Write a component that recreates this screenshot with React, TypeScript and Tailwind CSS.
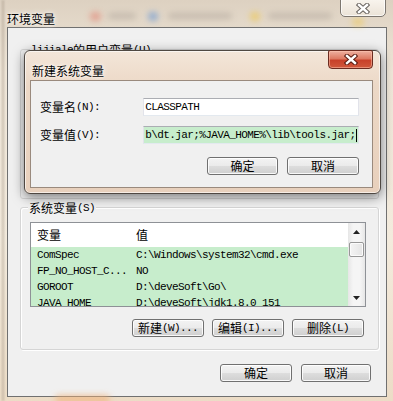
import type { ReactNode } from 'react'

const cjk = "font-['Noto_Sans_CJK_SC',sans-serif]"
const mono = "font-['Liberation_Mono',monospace] text-[11px] tracking-[-0.6px]"

function Btn({ children, className = '' }: { children: ReactNode; className?: string }) {
  return (
    <div
      className={`h-[18px] flex items-center justify-center rounded-[3px] border border-[#707070] bg-[linear-gradient(#f3f3f3_0%,#ebebeb_48%,#dddddd_52%,#cfcfcf_100%)] shadow-[inset_0_0_0_1px_rgba(255,255,255,0.85)] text-[12px] leading-none ${className}`}
    >
      {children}
    </div>
  )
}

function CaptionX({ dark = '#3b3b3b' }: { dark?: string }) {
  return (
    <svg width="14" height="11" viewBox="0 0 14 11">
      <path d="M3 2 L11 9 M11 2 L3 9" stroke={dark} strokeWidth="4.5" strokeLinecap="square" />
      <path d="M3 2 L11 9 M11 2 L3 9" stroke="#fff" strokeWidth="2.4" strokeLinecap="square" />
    </svg>
  )
}

const rows = [
  ['ComSpec', 'C:\\Windows\\system32\\cmd.exe'],
  ['FP_NO_HOST_C...', 'NO'],
  ['GOROOT', 'D:\\deveSoft\\Go\\'],
  ['JAVA_HOME', 'D:\\deveSoft\\jdk1.8.0_151'],
]

export default function App() {
  return (
    <div
      className={`relative w-[393px] h-[401px] overflow-hidden bg-[linear-gradient(180deg,#ddd1c1_0%,#efe6d8_18%,#f3ebdd_60%,#ecdcc6_100%)] text-black ${cjk}`}
    >
      {/* blurred stuff seen through the glass */}
      <div className="absolute left-[90px] top-[12px] w-[11px] h-[9px] rounded-full bg-[#e27f6e] blur-[3px] opacity-60" />
      <div className="absolute left-[108px] top-[13px] w-[28px] h-[6px] rounded bg-[#9a9088] blur-[3px] opacity-40" />
      <div className="absolute left-[148px] top-[12px] w-[10px] h-[9px] rounded-full bg-[#5a8fd6] blur-[3px] opacity-60" />
      <div className="absolute left-[168px] top-[13px] w-[64px] h-[6px] rounded bg-[#9a9088] blur-[3px] opacity-40" />
      <div className="absolute left-[250px] top-[12px] w-[10px] h-[9px] rounded-full bg-[#f0c540] blur-[3px] opacity-60" />
      <div className="absolute left-[268px] top-[13px] w-[64px] h-[6px] rounded bg-[#9a9088] blur-[3px] opacity-40" />
      <div className="absolute left-[352px] top-[18px] w-[12px] h-[8px] rounded-full bg-[#f0c540] blur-[3px] opacity-50" />
      <div className="absolute left-[2px] top-[0px] w-[2px] h-[401px] bg-[#a99c8d] blur-[1px] opacity-60" />
      <div className="absolute left-[55px] top-[395px] w-[55px] h-[8px] rounded-full bg-[#f0b27a] blur-[3px] opacity-70" />

      {/* outer title bar */}
      <div className="h-[27px] pl-[7px] pt-[5px]">
        <span className="text-[12px] leading-[15px] [text-shadow:0_0_6px_#fff,0_0_3px_#fff]">环境变量</span>
      </div>

      {/* outer client area */}
      <div className="ml-[7px] w-[380px] h-[370px] border border-[#707070] bg-[#f0f0f0]">
        <div className="flex flex-col pl-[12px] pr-[7px]">
          {/* user variables (hidden behind the dialog) */}
          <div className="mt-[21px] h-[150px] border border-[#d5d5d5] rounded-[3px] pl-[9px]">
            <div className="-mt-[7px] w-fit h-[14px] px-[1px] bg-[#f0f0f0] flex items-center text-[12px] leading-none">
              <span className={mono}>lijiale </span>
              <span>的用户变量</span>
              <span className={mono}>(U)</span>
            </div>
          </div>

          {/* system variables */}
          <div className="mt-[8px] border border-[#d5d5d5] rounded-[3px] shadow-[inset_1px_1px_0_#fff,1px_1px_0_#fff] pl-[9px] pr-[12px] pb-[12px]">
            <div className="-mt-[7px] -ml-[2px] w-fit h-[14px] px-[1px] bg-[#f0f0f0] flex items-center text-[12px] leading-none">
              <span>系统变量</span>
              <span className={mono}>(S)</span>
            </div>

            <div className="mt-[7px] h-[85px] border border-[#8e9196] bg-white flex overflow-hidden">
              <div className="flex-1 flex flex-col">
                <div className="h-[24px] shrink-0 grid grid-cols-[99px_1fr] items-center text-[12px] leading-none">
                  <span className="pl-[6px]">变量</span>
                  <span className="pl-[6px]">值</span>
                </div>
                {rows.map(([k, v]) => (
                  <div key={k} className="h-[16px] shrink-0 grid grid-cols-[99px_1fr] items-center bg-[#c7edcc]">
                    <span className={`pl-[6px] leading-none ${mono}`}>{k}</span>
                    <span className={`pl-[6px] leading-none ${mono}`}>{v}</span>
                  </div>
                ))}
              </div>
              <div className="w-[17px] flex flex-col bg-[linear-gradient(90deg,#e6e6e6,#f5f5f5_30%,#f5f5f5_70%,#e6e6e6)]">
                <div className="h-[17px] flex items-center justify-center">
                  <svg width="7" height="4" viewBox="0 0 7 4">
                    <path d="M0 4 L3.5 0 L7 4 Z" fill="#222" />
                  </svg>
                </div>
                <div className="mx-[1px] mt-[2px] h-[15px] rounded-[2px] border border-[#979797] bg-[linear-gradient(90deg,#f4f4f4,#e4e4e4)] shadow-[inset_0_0_0_1px_#fbfbfb]" />
                <div className="flex-1" />
                <div className="h-[17px] flex items-center justify-center">
                  <svg width="7" height="4" viewBox="0 0 7 4">
                    <path d="M0 0 L7 0 L3.5 4 Z" fill="#222" />
                  </svg>
                </div>
              </div>
            </div>

            <div className="mt-[12px] pr-[2px] flex justify-end gap-[8px]">
              <Btn className="w-[72px]">
                <span>新建</span>
                <span className={mono}>(W)...</span>
              </Btn>
              <Btn className="w-[72px]">
                <span>编辑</span>
                <span className={mono}>(I)...</span>
              </Btn>
              <Btn className="w-[72px]">
                <span>删除</span>
                <span className={mono}>(L)</span>
              </Btn>
            </div>
          </div>

          <div className="mt-[14px] pr-[8px] flex justify-end gap-[9px]">
            <Btn className="w-[72px]">确定</Btn>
            <Btn className="w-[70px]">取消</Btn>
          </div>
        </div>
      </div>

      {/* outer close button */}
      <div className="absolute left-[340px] top-[-3px] w-[46px] h-[20px] rounded-b-[5px] border border-[#7d7770] bg-[linear-gradient(#faf6f0,#ebe3d7)] shadow-[inset_0_0_0_1px_rgba(255,255,255,0.7)] flex items-center justify-center pt-[2px]">
        <CaptionX dark="#6a6560" />
      </div>

      {/* modal dialog */}
      <div className="absolute left-[24px] top-[50px] w-[357px] h-[144px] rounded-[6px] border border-[#4f4842] bg-[linear-gradient(180deg,#f3e6d9_0%,#ecd8c6_25%,#e8d0bc_100%)] shadow-[0_3px_12px_rgba(0,0,0,0.5),inset_0_0_0_1px_rgba(255,255,255,0.6)] flex flex-col pl-[5px] pr-[7px]">
        <div className="h-[29px] shrink-0 pl-[2px] pt-[6px]">
          <span className="text-[12px] leading-[15px] [text-shadow:0_0_6px_#fff,0_0_3px_#fff]">新建系统变量</span>
        </div>
        <div className="h-[108px] border border-[#9a8a7d] bg-[#f0f0f0] pt-[17px] pl-[9px] pr-[13px]">
          <div className="h-[18px] flex items-center">
            <div className="w-[104px] flex items-center text-[12px] leading-none">
              <span>变量名</span>
              <span className={mono}>(N):</span>
            </div>
            <div className="w-[217px] h-[18px] border border-[#abadb3] border-l-[#e2e3ea] border-r-[#e2e3ea] border-b-[#e3e9ef] bg-white flex items-center pl-[1px]">
              <span className={`${mono} leading-none`}>CLASSPATH</span>
            </div>
          </div>
          <div className="mt-[10px] h-[18px] flex items-center">
            <div className="w-[104px] flex items-center text-[12px] leading-none">
              <span>变量值</span>
              <span className={mono}>(V):</span>
            </div>
            <div className="w-[217px] h-[18px] border border-[#abadb3] border-l-[#e2e3ea] border-r-[#e2e3ea] border-b-[#e3e9ef] bg-[#c7edcc] flex items-center pl-[1px] overflow-hidden">
              <span className={`${mono} leading-none whitespace-nowrap`}>b\dt.jar;%JAVA_HOME%\lib\tools.jar;</span>
              <span className="ml-[1px] w-px h-[13px] bg-black shrink-0" />
            </div>
          </div>
          <div className="mt-[13px] flex justify-end gap-[9px]">
            <Btn className="w-[71px]">确定</Btn>
            <Btn className="w-[72px]">取消</Btn>
          </div>
        </div>

        {/* dialog close button */}
        <div className="absolute right-[7px] top-[-1px] w-[45px] h-[19px] rounded-b-[4px] rounded-t-[2px] border border-[#6b2b20] bg-[linear-gradient(#eeb0a0_0%,#dd7a63_45%,#c8412a_55%,#d0583c_100%)] shadow-[inset_0_0_0_1px_rgba(255,200,180,0.5)] flex items-center justify-center">
          <CaptionX dark="#5a1c12" />
        </div>
      </div>
    </div>
  )
}
